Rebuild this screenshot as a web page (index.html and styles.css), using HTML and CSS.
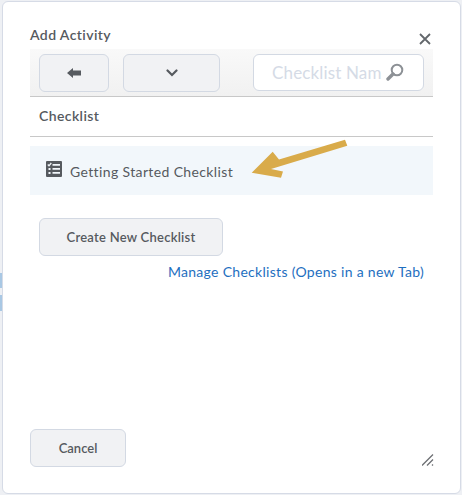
FILE: index.html
```html
<!DOCTYPE html>
<html lang="en">
<head>
<meta charset="utf-8">
<title>Add Activity</title>
<link rel="stylesheet" href="styles.css">
</head>
<body>
<div class="dialog">
  <h1 class="title">Add Activity</h1>
  <button class="close" aria-label="Close">
    <svg width="12" height="12" viewBox="0 0 12 12"><path d="M1 1l10 10M11 1L1 11" stroke="#63676c" stroke-width="1.800" fill="none"/></svg>
  </button>
  <div class="toolbar">
    <button class="btn btn-back" aria-label="Back">
      <svg width="14" height="10" viewBox="0 0 14 10"><path d="M0 5l6-5v2.500h8v5H6V10z" fill="#565a5f"/></svg>
    </button>
    <button class="btn btn-menu" aria-label="More">
      <svg width="12" height="8" viewBox="0 0 12 8"><path d="M1.500 1.500L6 6l4.500-4.500" stroke="#565a5f" stroke-width="2.200" stroke-linecap="round" fill="none"/></svg>
    </button>
    <div class="search">
      <span class="placeholder">Checklist Nam</span>
      <svg class="search-icon" width="18" height="19" viewBox="0 0 18 19"><circle cx="11" cy="7" r="5.300" stroke="#8d9196" stroke-width="2" fill="none"/><path d="M7 11l-5 5" stroke="#8d9196" stroke-width="3.400" stroke-linecap="round"/></svg>
    </div>
  </div>
  <h2 class="section">Checklist</h2>
  <div class="item">
    <svg class="item-icon" width="16" height="16" viewBox="0 0 16 16"><path fill-rule="evenodd" d="M1 0h14a1 1 0 0 1 1 1v14a1 1 0 0 1-1 1H1a1 1 0 0 1-1-1V1a1 1 0 0 1 1-1zM6.500 3v1.800H14V3zM6.500 7v1.800H14V7zM6.500 11v1.800H14V11zM2.500 7v2h2V7zM2.500 11v2h2v-2z" fill="#565a5f"/><path d="M1.800 3.500l1.200 1.300 2.300-2.800" stroke="#f2f7fb" stroke-width="1.300" fill="none"/></svg>
    <span>Getting Started Checklist</span>
  </div>
  <button class="btn btn-create">Create New Checklist</button>
  <div class="link-row"><a class="link" href="#">Manage Checklists (Opens in a new Tab)</a></div>
  <div class="footer"><button class="btn btn-cancel">Cancel</button></div>
  <svg class="grip" width="12" height="12" viewBox="0 0 12 12"><path d="M0 11.500L11 .5M5 11.500l6-6M10 11.500l1-1" stroke="#6e7175" stroke-width="1.300" fill="none"/></svg>
  <svg class="arrow" width="100" height="42" viewBox="0 0 100 42"><path d="M96 2.700L98.300 8.700 22 32 34 34.500 32 40.700 2.700 35.700 23.700 14.700 30 22.500z" fill="#d9ab4a"/></svg>
</div>
</body>
</html>
```
FILE: styles.css
```css
* { box-sizing: border-box; }
html, body { margin: 0; height: 100%; }
body {
  background-color: #eef0f4;
  background-image:
    linear-gradient(#a9c8e4, #a9c8e4),
    linear-gradient(#a9c8e4, #a9c8e4);
  background-repeat: no-repeat;
  background-size: 2px 15px, 2px 16px;
  background-position: 0 273px, 0 295px;
  padding: 1px 1px 1px 2px;
  font-family: Lato, "Open Sans", sans-serif;
  color: #565a5f;
  overflow: hidden;
}
.dialog {
  position: relative;
  display: flex;
  flex-direction: column;
  width: 459px;
  height: 493px;
  background: #fff;
  border: 1px solid #d6dbe6;
  border-radius: 6px;
  padding: 0 28px 0 27px;
}
.title {
  margin: 0;
  padding-top: 23px;
  height: 47px;
  font-size: 14px;
  line-height: 20px;
  font-weight: 600;
  letter-spacing: .4px;
}
.close {
  position: absolute;
  top: 30px;
  left: 415px;
  width: 14px;
  height: 14px;
  padding: 1px;
  border: 0;
  background: none;
  display: flex;
}
.toolbar {
  display: flex;
  align-items: flex-start;
  height: 48px;
  width: 403px;
  padding: 5px 9px 0;
  background: linear-gradient(#f9f9f9, #f1f1f1);
  border-bottom: 1px solid #c8c8c8;
}
.btn {
  font-family: inherit;
  color: inherit;
  background: #f1f2f4;
  border: 1px solid #d3d9e3;
  border-radius: 6px;
  display: flex;
  align-items: center;
  justify-content: center;
  padding: 0;
}
.btn-back { width: 70px; height: 38px; }
.btn-menu { width: 97px; height: 38px; margin-left: 14px; }
.search {
  display: flex;
  align-items: center;
  width: 171px;
  height: 37px;
  margin-left: 33px;
  padding-left: 18px;
  background: #fff;
  border: 1px solid #d3d9e3;
  border-radius: 6px;
  overflow: hidden;
}
.placeholder {
  font-size: 17px;
  letter-spacing: .15px;
  color: #d5dbe6;
  white-space: nowrap;
}
.search-icon { margin-left: 4px; flex: none; }
.section {
  margin: 0;
  width: 403px;
  height: 40px;
  padding-left: 9px;
  font-size: 14px;
  line-height: 38px;
  font-weight: 600;
  letter-spacing: .4px;
  border-bottom: 1px solid #c8c8c8;
}
.item {
  display: flex;
  align-items: flex-start;
  width: 403px;
  height: 49px;
  margin-top: 9px;
  padding: 15px 0 0 16px;
  background: #f2f7fb;
  font-size: 14px;
  line-height: 22px;
  letter-spacing: .37px;
}
.item-icon { flex: none; margin-right: 8px; }
.btn-create {
  width: 184px;
  height: 38px;
  margin: 23px 0 0 9px;
  font-size: 13px;
  font-weight: 600;
  letter-spacing: .25px;
}
.link-row {
  width: 394px;
  margin-top: 6px;
  text-align: right;
  font-size: 14px;
  line-height: 20px;
}
.link { color: #1e6fbf; text-decoration: none; letter-spacing: .3px; }
.footer { margin-top: auto; padding-bottom: 26px; }
.btn-cancel {
  width: 96px;
  height: 38px;
  font-size: 13px;
  font-weight: 600;
}
.grip { position: absolute; left: 419px; top: 452px; }
.arrow { position: absolute; left: 246px; top: 135px; }
```
